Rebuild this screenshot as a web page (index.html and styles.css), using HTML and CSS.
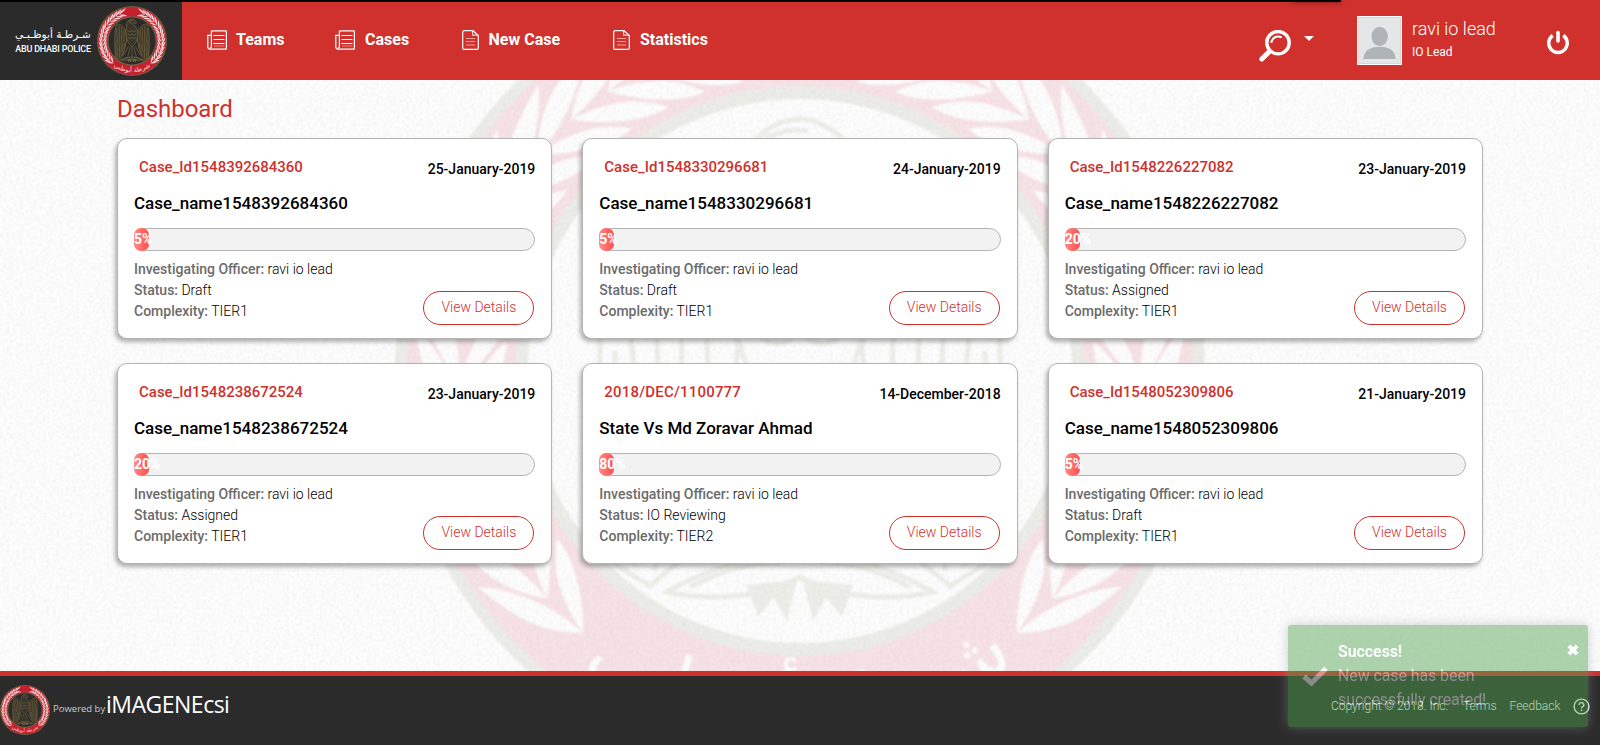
FILE: index.html
```html
<!DOCTYPE html>
<html lang="en">
<head>
<meta charset="utf-8">
<title>Dashboard</title>
<link rel="stylesheet" href="styles.css">
</head>
<body>
<svg class="defs" width="0" height="0" aria-hidden="true">
  <defs>
    <filter id="grain" x="0" y="0" width="100%" height="100%">
      <feTurbulence type="fractalNoise" baseFrequency="0.3" numOctaves="3" seed="4"/>
      <feColorMatrix type="matrix" values="0 0 0 0 0.5  0 0 0 0 0.5  0 0 0 0 0.5  0.24 0 0 0 -0.085"/>
    </filter>
    <g id="pair">
      <path transform="rotate(-16)" d="M0 0Q40 -17 78 -9Q100 -5 115 0Q98 7 74 9Q36 12 0 0Z"/>
      <path transform="rotate(35)" d="M0 0Q36 -13 66 -10Q86 -6 98 0Q84 7 62 8Q32 9 0 0Z"/>
    </g>
    <g id="wreath">
      <use href="#pair" transform="rotate(129.6) translate(340 0) rotate(90)"/>
      <use href="#pair" transform="rotate(138) translate(340 0) rotate(90)"/>
      <use href="#pair" transform="rotate(146) translate(340 0) rotate(90)"/>
      <use href="#pair" transform="rotate(154) translate(340 0) rotate(90)"/>
      <use href="#pair" transform="rotate(162) translate(340 0) rotate(90)"/>
      <use href="#pair" transform="rotate(170) translate(340 0) rotate(90)"/>
      <use href="#pair" transform="rotate(178) translate(340 0) rotate(90)"/>
      <use href="#pair" transform="rotate(186) translate(340 0) rotate(90)"/>
      <use href="#pair" transform="rotate(194) translate(340 0) rotate(90)"/>
      <use href="#pair" transform="rotate(202) translate(340 0) rotate(90)"/>
      <use href="#pair" transform="rotate(211) translate(340 0) rotate(90)"/>
      <use href="#pair" transform="rotate(219.5) translate(340 0) rotate(90)"/>
      <use href="#pair" transform="rotate(227.7) translate(340 0) rotate(90)"/>
      <use href="#pair" transform="rotate(235.4) translate(340 0) rotate(90)"/>
      <use href="#pair" transform="rotate(243) translate(340 0) rotate(90)"/>
    </g>
    <path id="arc" d="M-283 226A362 362 0 0 0 283 226"/>
    <g id="wing">
      <path d="M-70 -120C-110 -190 -150 -205 -180 -190C-205 -120 -205 60 -190 190L-150 215L-120 190C-90 120 -70 40 -62 -20Z"/>
      <path d="M-180 -150L-160 60M-150 -180L-140 40M-120 -160L-118 30M-95 -130L-92 10M-185 -20V180M-165 60V195M-145 50V200M-125 40V180M-105 30V130M-88 20V90"/>
    </g>
    <symbol id="emblem" viewBox="-405 -405 810 810">
      <circle class="em-olive" r="405"/>
      <circle class="em-ring" r="393"/>
      <g class="em-leaf"><use href="#wreath"/><use href="#wreath" transform="scale(-1 1)"/></g>
      <circle class="em-olive" r="285"/>
      <circle class="em-inner" r="272"/>
      <g class="em-eagle">
        <use href="#wing"/><use href="#wing" transform="scale(-1 1)"/>
        <path d="M-62 -175C-66 -235 -10 -268 26 -244C52 -232 56 -206 40 -196C30 -214 14 -214 6 -206C22 -180 70 -150 68 -80C66 -20 40 40 0 70C-40 40 -66 -20 -68 -80C-68 -130 -60 -150 -62 -175Z"/>
        <path d="M-45 -225Q-20 -245 8 -240M-20 -222a7 7 0 1 0 1 0M-50 -120Q-25 -95 0 -120Q25 -95 50 -120M-50 -80Q-25 -55 0 -80Q25 -55 50 -80M-45 -40Q-22 -15 0 -40Q22 -15 45 -40"/>
        <path d="M-40 60L-100 170M40 60L100 170M-20 70L-50 180M20 70L50 180M0 70V190"/>
        <path d="M-133 221Q-60 180 0 184Q60 180 133 221Q60 236 0 206Q-60 236 -133 221ZM-110 216Q-60 190 -20 192M110 216Q60 190 20 192"/>
        <path class="em-tail" d="M-50 216L-41 241L-26 222L-14 243L-6 212ZM50 216L41 241L26 222L14 243L6 212Z"/>
      </g>
      <text class="em-text"><textPath href="#arc" startOffset="50%" text-anchor="middle">شرطة أبوظبي</textPath></text>
    </symbol>
    <symbol id="i-list" viewBox="0 0 20 20">
      <g fill="none" stroke="#fff" stroke-width="1.2">
        <path d="M4.4 .8H18.6a.8 .8 0 0 1 .8 .8V18.4a.8 .8 0 0 1-.8 .8H3A2.2 2.2 0 0 1 .8 17V5.4H4.2"/>
        <path d="M4.4 .8V16.5a1.6 1.6 0 0 1-1.6 1.6"/>
        <path d="M6.500 5.500H17.400M6.500 9.500H17.400M6.500 13.500H17.400" stroke-width="1"/>
        <path d="M7 16H17.4" opacity=".3"/>
      </g>
    </symbol>
    <symbol id="i-page" viewBox="0 0 17 20">
      <g fill="none" stroke="#fff" stroke-width="1.2">
        <path d="M2 .7H11L16.3 5.6V18.2a1.2 1.2 0 0 1-1.2 1.1H1.9A1.2 1.2 0 0 1 .7 18.2V1.9A1.2 1.2 0 0 1 1.9 .7Z"/>
        <path d="M10.6 1V5.2H16" opacity=".75"/>
        <path d="M4 8.500H13M4 11.500H13M4 15H13" opacity=".55" stroke-width="1"/>
      </g>
    </symbol>
  </defs>
</svg>

<div class="page">
  <div class="progress-top"></div>
  <header class="header">
    <div class="brand">
      <div class="brand-name">
        <span class="brand-ar" lang="ar">شـرطـة أبوظـبـي</span>
        <span class="brand-en">ABU DHABI POLICE</span>
      </div>
      <svg class="emblem emblem-dark brand-emblem"><use href="#emblem"/></svg>
    </div>
    <nav class="nav">
      <a class="nav-item nav-teams"><svg width="20" height="20"><use href="#i-list"/></svg>Teams</a>
      <a class="nav-item nav-cases"><svg width="20" height="20"><use href="#i-list"/></svg>Cases</a>
      <a class="nav-item nav-new"><svg width="17" height="20"><use href="#i-page"/></svg>New Case</a>
      <a class="nav-item"><svg width="17" height="20"><use href="#i-page"/></svg>Statistics</a>
    </nav>
    <div class="search">
      <svg width="33" height="33" viewBox="0 0 33 33" fill="none" stroke="#fff" stroke-linecap="round">
        <circle cx="19" cy="12.7" r="11.2" stroke-width="3.4"/>
        <path d="M12.4 12A7 7 0 0 1 21.8 7" stroke-width="2.2"/>
        <path d="M10.400 21.400L2.800 29" stroke-width="5"/>
      </svg>
      <svg class="caret" width="10" height="5" viewBox="0 0 10 5"><path d="M0 0H10L5 5Z" fill="#fff"/></svg>
    </div>
    <div class="user">
      <svg class="avatar" width="45" height="49" viewBox="0 0 45 49">
        <rect width="45" height="49" fill="#fff"/>
        <rect x="1.5" y="1.5" width="42" height="46" fill="#e4e6e7" stroke="#e3d3d3"/>
        <ellipse cx="22.7" cy="20.5" rx="8.2" ry="9.7" fill="#aeb4b7"/>
        <path d="M6.3 43C6.8 35 13 30.8 22.6 30.8S38.300 35 38.800 43Z" fill="#aeb4b7"/>
      </svg>
      <div class="user-text"><span class="user-name">ravi io lead</span><span class="user-role">IO Lead</span></div>
    </div>
    <svg class="power" width="24" height="25" viewBox="0 0 24 25" fill="none" stroke="#fff" stroke-linecap="round">
      <path d="M6.700 5.500A9.300 9.300 0 1 0 17.300 5.500" stroke-width="3.400" stroke-linecap="butt"/>
      <path d="M12 2.500V11" stroke-width="3.600"/>
    </svg>
  </header>

  <main class="main">
    <svg class="emblem emblem-faint watermark"><use href="#emblem"/></svg>
    <svg class="grain"><rect width="100%" height="100%" filter="url(#grain)"/></svg>
    <div class="content">
      <h1 class="title">Dashboard</h1>
      <div class="cards">
        <article class="card">
          <div class="card-top"><span class="case-id">Case_Id1548392684360</span><span class="date">25-January-2019</span></div>
          <h2 class="case-name">Case_name1548392684360</h2>
          <div class="bar"><div class="bar-fill">5%</div></div>
          <div class="card-bottom">
            <div class="info"><p><b>Investigating Officer:</b> ravi io lead</p><p><b>Status:</b> Draft</p><p><b>Complexity:</b> TIER1</p></div>
            <a class="btn">View Details</a>
          </div>
        </article>
        <article class="card">
          <div class="card-top"><span class="case-id">Case_Id1548330296681</span><span class="date">24-January-2019</span></div>
          <h2 class="case-name">Case_name1548330296681</h2>
          <div class="bar"><div class="bar-fill">5%</div></div>
          <div class="card-bottom">
            <div class="info"><p><b>Investigating Officer:</b> ravi io lead</p><p><b>Status:</b> Draft</p><p><b>Complexity:</b> TIER1</p></div>
            <a class="btn">View Details</a>
          </div>
        </article>
        <article class="card">
          <div class="card-top"><span class="case-id">Case_Id1548226227082</span><span class="date">23-January-2019</span></div>
          <h2 class="case-name">Case_name1548226227082</h2>
          <div class="bar"><div class="bar-fill">20%</div></div>
          <div class="card-bottom">
            <div class="info"><p><b>Investigating Officer:</b> ravi io lead</p><p><b>Status:</b> Assigned</p><p><b>Complexity:</b> TIER1</p></div>
            <a class="btn">View Details</a>
          </div>
        </article>
        <article class="card">
          <div class="card-top"><span class="case-id">Case_Id1548238672524</span><span class="date">23-January-2019</span></div>
          <h2 class="case-name">Case_name1548238672524</h2>
          <div class="bar"><div class="bar-fill">20%</div></div>
          <div class="card-bottom">
            <div class="info"><p><b>Investigating Officer:</b> ravi io lead</p><p><b>Status:</b> Assigned</p><p><b>Complexity:</b> TIER1</p></div>
            <a class="btn">View Details</a>
          </div>
        </article>
        <article class="card">
          <div class="card-top"><span class="case-id case-ref">2018/DEC/1100777</span><span class="date">14-December-2018</span></div>
          <h2 class="case-name">State Vs Md Zoravar Ahmad</h2>
          <div class="bar"><div class="bar-fill">80%</div></div>
          <div class="card-bottom">
            <div class="info"><p><b>Investigating Officer:</b> ravi io lead</p><p><b>Status:</b> IO Reviewing</p><p><b>Complexity:</b> TIER2</p></div>
            <a class="btn">View Details</a>
          </div>
        </article>
        <article class="card">
          <div class="card-top"><span class="case-id">Case_Id1548052309806</span><span class="date">21-January-2019</span></div>
          <h2 class="case-name">Case_name1548052309806</h2>
          <div class="bar"><div class="bar-fill">5%</div></div>
          <div class="card-bottom">
            <div class="info"><p><b>Investigating Officer:</b> ravi io lead</p><p><b>Status:</b> Draft</p><p><b>Complexity:</b> TIER1</p></div>
            <a class="btn">View Details</a>
          </div>
        </article>
      </div>
    </div>
  </main>

  <footer class="footer">
    <div class="powered">
      <svg class="emblem emblem-dark footer-emblem"><use href="#emblem"/></svg>
      <span class="powered-by">Powered by</span>
      <span class="product">iMAGENEcsi</span>
    </div>
    <div class="links">
      <span class="copy">Copyright © 2018. Inc.</span>
      <a class="terms">Terms</a>
      <a class="feedback">Feedback</a>
      <svg width="17" height="17" viewBox="0 0 17 17" fill="none" stroke="#fff" stroke-width="1.400">
        <circle cx="8.500" cy="8.500" r="7.400"/>
        <path d="M6.200 7A2.300 2.200 0 1 1 9.600 8.700Q8.500 9.300 8.500 10.400"/>
        <path d="M8.500 11.600V13.100"/>
      </svg>
    </div>
  </footer>

  <div class="toast">
    <svg class="toast-check" width="26" height="20" viewBox="0 0 26 20"><path d="M2 10.500L9.500 17L24 2.500" fill="none" stroke="#fff" stroke-width="5"/></svg>
    <div class="toast-body">
      <div class="toast-title">Success!</div>
      <div class="toast-msg">New case has been successfully created!</div>
    </div>
    <svg class="toast-close" width="12" height="12" viewBox="0 0 12 12"><path d="M1.800 1.800L10.200 10.200M10.200 1.800L1.800 10.200" stroke="#fff" stroke-width="4"/></svg>
  </div>
</div>
</body>
</html>
```
FILE: styles.css
```css
* { box-sizing: border-box; }
body { margin: 0; font-family: Roboto, "Liberation Sans", sans-serif; color: #000; overflow: hidden; }
.defs { position: absolute; }
.page { position: relative; width: 1600px; height: 745px; display: flex; flex-direction: column; overflow: hidden; }

.progress-top { position: absolute; left: 0; top: 0; width: 1341px; height: 2px; background: #000; z-index: 2; }
.progress-top::after { content: ""; position: absolute; right: 0; top: 0; width: 50px; height: 2px; box-shadow: 0 0 5px rgba(0,0,0,.7); }

.header { height: 80px; flex: none; background: #d0312d; display: flex; color: #fff; }
.brand { width: 182px; background: #2b2b2b; display: flex; align-items: center; padding: 1px 0 0 15px; }
.brand-name { width: 76px; height: 30px; display: flex; flex-direction: column; align-items: center; margin: 1px 6px 0 0; white-space: nowrap; }
.brand-ar { font: 10.5px/17px "DejaVu Sans", sans-serif; }
.brand-en { font: 500 9px/10px Roboto, sans-serif; letter-spacing: -.2px; margin-top: 1px; }
.brand-emblem { width: 70px; height: 70px; }

.nav { display: flex; padding: 30px 0 0 25px; width: 1077px; }
.nav-item { display: flex; height: 20px; gap: 10px; line-height: 20px; font-size: 16px; font-weight: 700; white-space: nowrap; }
.nav-teams { width: 128px; gap: 9px; }
.nav-cases { width: 127px; }
.nav-new { width: 151px; gap: 9.5px; }
.nav-item svg { flex: none; }
.search { display: flex; width: 98px; padding-top: 30px; }
.caret { margin: 6px 0 0 12px; }
.user { display: flex; width: 189px; padding-top: 16px; gap: 10px; }
.user-text { display: flex; flex-direction: column; white-space: nowrap; }
.user-name { font-size: 18px; font-weight: 300; line-height: 26px; }
.user-role { font-size: 12px; line-height: 16px; margin-top: 2px; }
.power { margin-top: 30px; }

.main { position: relative; flex: 1; background: #fdfdfd; overflow: hidden; }
.watermark { position: absolute; left: 395px; top: -114px; width: 810px; height: 810px; }
.grain { position: absolute; left: 0; top: 0; width: 100%; height: 100%; }
.content { position: relative; padding: 0 117px; }
.title { margin: 0; padding-top: 14px; font-size: 24px; line-height: 30px; height: 58px; font-weight: 400; letter-spacing: -.05px; color: #d0312d; }
.cards { display: grid; grid-template-columns: repeat(3, 1fr); gap: 24px 30px; }
.card { height: 201px; background: #fff; border: 1px solid #b4b4b4; border-radius: 10px; box-shadow: -2px 3px 4px rgba(0,0,0,.3); padding: 16px 16px 0; }
.card-top { display: flex; justify-content: space-between; height: 38px; }
.case-id { font-size: 15px; font-weight: 500; line-height: 24px; color: #d0312d; padding-left: 5px; }
.case-ref { letter-spacing: .2px; }
.date { font-size: 14px; font-weight: 500; line-height: 28px; }
.case-name { margin: 0; font-size: 17px; font-weight: 500; line-height: 20px; }
.bar { height: 23px; margin-top: 15px; background: #f2f2f2; border: 1px solid #b4b4b4; border-radius: 12px; }
.bar-fill { width: 15px; height: 23px; margin: -1px 0 0 -1px; border-radius: 7px; background: linear-gradient(90deg, #ff8a84, #ff4d4d); color: #fff; font-size: 14px; font-weight: 700; line-height: 23px; white-space: nowrap; }
.card-bottom { display: flex; justify-content: space-between; padding-top: 8px; }
.info p { margin: 0; font-size: 14px; font-weight: 300; line-height: 21px; }
.info b { font-weight: 500; color: #6b6b6b; }
.btn { width: 111px; height: 34px; margin: 32px 1px 0 0; border: 1px solid #d0312d; border-radius: 17px; color: #d0312d; font-size: 14px; font-weight: 300; line-height: 31px; text-align: center; }

.footer { height: 74px; flex: none; border-top: 5px solid #d0312d; background: #2b2b2b; display: flex; justify-content: space-between; }
.powered { display: flex; padding-top: 9px; }
.footer-emblem { width: 50px; height: 50px; }
.powered-by { font: 9.5px/20px "Open Sans", sans-serif; color: #ccc; margin: 14px 0 0 3px; width: 53px; white-space: nowrap; }
.product { font: 500 23px/30px "Open Sans", sans-serif; color: #fff; margin-top: 4px; letter-spacing: -.5px; }
.links { display: flex; padding: 21px 10px 0 0; color: #fff; font-size: 12px; font-weight: 300; line-height: 18px; white-space: nowrap; }
.copy { width: 132px; }
.terms { width: 46.500px; }
.feedback { width: 63.500px; }
.links svg { margin-top: 1px; }

.toast { position: absolute; left: 1288px; top: 625px; width: 300px; height: 102px; border-radius: 3px; background: #51a351; opacity: .46; box-shadow: 0 0 12px #999; color: #fff; display: flex; padding: 15px 9px 0 14px; }
.toast-check { margin-top: 26px; }
.toast-body { margin-left: 10px; width: 160px; font-size: 16px; line-height: 24px; letter-spacing: -.1px; }
.toast-title { font-weight: 700; }
.toast-msg { font-weight: 400; }
.toast-close { margin: 4px 0 0 auto; }

.emblem { display: block; flex: none; }
.em-text { font-family: "DejaVu Sans", sans-serif; font-size: 76px; }
.em-olive { fill: var(--olive); }
.em-ring { fill: var(--ring); }
.em-leaf, .em-text { fill: var(--leaf); }
.em-inner { fill: var(--inner); }
.em-eagle { fill: var(--body); stroke: var(--line); stroke-width: var(--sw); }
.em-tail { fill: var(--line); }
.emblem-dark { --olive: #6f6440; --ring: #c4202f; --leaf: #f3dcdc; --inner: #2b2b2b; --body: #3a3529; --line: #75673f; --sw: 8; }
.emblem-faint { --olive: #ececE8; --ring: #f7e2e6; --leaf: #fdfdfd; --inner: #fdfdfd; --body: none; --line: #edede9; --sw: 5; filter: blur(.9px); }
```
